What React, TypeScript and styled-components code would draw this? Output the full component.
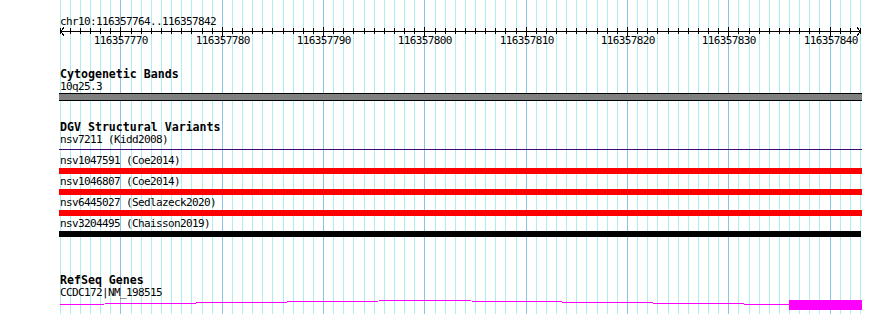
import React from "react";
import styled, { createGlobalStyle } from "styled-components";

const GlobalStyle = createGlobalStyle`
  html, body { margin: 0; padding: 0; background: #ffffff; }
  body { font-family: "DejaVu Sans Mono", "Liberation Mono", monospace; }
`;

const START = 116357764;
const END = 116357842;
const BASES = END - START + 1;
const LEFT = 59;
const TRACK_W = 803;
const RULER_H = 21;

const colFor = (i: number) => Math.floor(60.2 + i * 10.13);

const Canvas = styled.div`
  position: relative;
  width: 890px;
  height: 314px;
  overflow: hidden;
  background: #ffffff;
`;

const GridLayer = styled.svg`
  position: absolute;
  left: 0;
  top: 0;
  width: 890px;
  height: 314px;
  shape-rendering: crispEdges;
`;

const Content = styled.div`
  position: relative;
  display: flex;
  flex-direction: column;
  padding: 16px 0 0 ${LEFT}px;
  width: ${TRACK_W}px;
`;

const SmallText = styled.div<{ $lh?: number }>`
  font-family: "DejaVu Sans Mono", "Liberation Mono", monospace;
  font-size: 11px;
  letter-spacing: -0.62px;
  line-height: ${(p) => p.$lh ?? 12}px;
  height: ${(p) => p.$lh ?? 12}px;
  color: #000000;
  white-space: pre;
  padding-left: 1px;
`;

const Section = styled.section<{ $mt: number }>`
  display: flex;
  flex-direction: column;
  margin-top: ${(p) => p.$mt}px;
`;

const TrackTitle = styled.h2`
  margin: 0;
  font-family: "DejaVu Sans Mono", "Liberation Mono", monospace;
  font-weight: bold;
  font-size: 11.6px;
  line-height: 14px;
  height: 14px;
  color: #000000;
  white-space: pre;
  padding-left: 1px;
`;

const RulerSvg = styled.svg`
  display: block;
  width: ${TRACK_W}px;
  height: ${RULER_H}px;
  shape-rendering: crispEdges;
  overflow: visible;
`;

const BandBar = styled.div`
  height: 6px;
  background: #808080;
  border-top: 1px solid #000000;
  border-bottom: 1px solid #000000;
`;

const Rule = styled.div<{ $color: string }>`
  height: 1px;
  margin-top: 3px;
  background: ${(p) => p.$color};
`;

const FeatureRow = styled.div<{ $mt: number }>`
  display: flex;
  flex-direction: column;
  margin-top: ${(p) => p.$mt}px;
`;

const FeatureBar = styled.div<{ $color: string; $trim?: number }>`
  height: 6px;
  margin-top: 1px;
  margin-right: ${(p) => p.$trim ?? 0}px;
  background: ${(p) => p.$color};
`;

const GeneSvg = styled.svg`
  display: block;
  width: ${TRACK_W}px;
  height: 12px;
  shape-rendering: crispEdges;
`;

function Grid() {
  const lines = [];
  for (let i = 0; i < BASES + 1; i++) {
    const pos = START + i;
    const x = colFor(i) + 0.5;
    const major = pos % 10 === 0;
    lines.push(
      <line
        key={i}
        x1={x}
        x2={x}
        y1={0}
        y2={314}
        stroke={major ? "#86c4e8" : "#afeeee"}
        strokeWidth={1}
      />
    );
  }
  return <GridLayer viewBox="0 0 890 314">{lines}</GridLayer>;
}

function Ruler() {
  const ticks = [];
  const labels = [];
  for (let i = 0; i < BASES + 1; i++) {
    const pos = START + i;
    const x = colFor(i) - LEFT + 0.5;
    const major = pos % 10 === 0;
    ticks.push(
      <line
        key={`t${i}`}
        x1={x}
        x2={x}
        y1={major ? 0 : 1}
        y2={major ? 9 : 7}
        stroke="#000"
        strokeWidth={1}
      />
    );
    if (major) {
      labels.push(
        <text
          key={`l${i}`}
          x={x + 0.3}
          y={17}
          textAnchor="middle"
          fontFamily='"DejaVu Sans Mono", "Liberation Mono", monospace'
          fontSize={11}
          letterSpacing={-0.62}
          fill="#000"
        >
          {pos}
        </text>
      );
    }
  }
  return (
    <RulerSvg viewBox={`0 0 ${TRACK_W} ${RULER_H}`}>
      <line x1={1} x2={802} y1={4.5} y2={4.5} stroke="#000" strokeWidth={1} />
      <polyline points="5,0.5 1.5,4.5 5,8.5" fill="none" stroke="#000" strokeWidth={1} />
      <polyline points="798,0.5 801.5,4.5 798,8.5" fill="none" stroke="#000" strokeWidth={1} />
      {ticks}
      {labels}
    </RulerSvg>
  );
}

function GeneGlyph() {
  return (
    <GeneSvg viewBox={`0 0 ${TRACK_W} 12`}>
      <polyline
        points="1,5.5 366,1.5 730,5.5"
        fill="none"
        stroke="#ff00ff"
        strokeWidth={1}
      />
      <rect x={730} y={1} width={73} height={10} fill="#ff00ff" />
    </GeneSvg>
  );
}

const variants = [
  { name: "nsv1047591", src: "Coe2014", color: "#ff0000", trim: 0 },
  { name: "nsv1046807", src: "Coe2014", color: "#ff0000", trim: 0 },
  { name: "nsv6445027", src: "Sedlazeck2020", color: "#ff0000", trim: 0 },
  { name: "nsv3204495", src: "Chaisson2019", color: "#000000", trim: 1 },
];

export default function App() {
  return (
    <>
      <GlobalStyle />
      <Canvas>
        <Grid />
        <Content>
          <SmallText $lh={11}>chr10:116357764..116357842</SmallText>
          <Ruler />

          <Section $mt={22 - (RULER_H - 18)}>
            <TrackTitle>Cytogenetic Bands</TrackTitle>
            <SmallText>10q25.3</SmallText>
            <BandBar />
          </Section>

          <Section $mt={19}>
            <TrackTitle>DGV Structural Variants</TrackTitle>
            <SmallText>nsv7211 (Kidd2008)</SmallText>
            <Rule $color="#3c0a70" />
            {variants.map((v, idx) => (
              <FeatureRow key={v.name} $mt={idx === 0 ? 5 : 2}>
                <SmallText>{`${v.name} (${v.src})`}</SmallText>
                <FeatureBar $color={v.color} $trim={v.trim} />
              </FeatureRow>
            ))}
          </Section>

          <Section $mt={36}>
            <TrackTitle>RefSeq Genes</TrackTitle>
            <SmallText>CCDC172|NM_198515</SmallText>
            <GeneGlyph />
          </Section>
        </Content>
      </Canvas>
    </>
  );
}
